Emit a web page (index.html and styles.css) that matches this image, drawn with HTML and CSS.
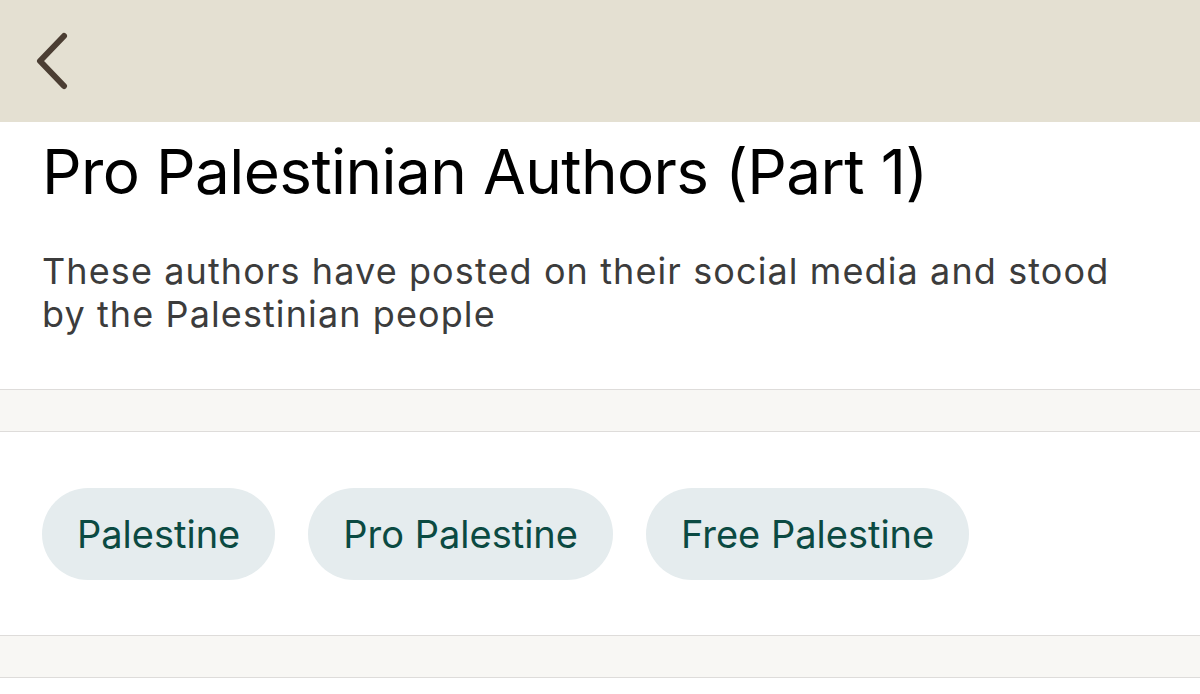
FILE: index.html
```html
<!DOCTYPE html>
<html lang="en">
<head>
  <meta charset="utf-8">
  <title>Pro Palestinian Authors (Part 1)</title>
  <link rel="stylesheet" href="styles.css">
</head>
<body>

<div class="topbar">
  <a href="#" class="back" aria-label="Back">
    <svg width="40" height="60" viewBox="0 0 40 60">
      <polyline points="28,5 4,30 28,55" fill="none" stroke="#4b3e33" stroke-width="6" stroke-linecap="round" stroke-linejoin="round"/>
    </svg>
  </a>
</div>

<div class="intro">
  <h1>Pro Palestinian Authors (Part 1)</h1>
  <p>These authors have posted on their social media and stood by the Palestinian people</p>
</div>

<div class="gap"></div>

<div class="tags">
  <a href="#" class="tag">Palestine</a>
  <a href="#" class="tag">Pro Palestine</a>
  <a href="#" class="tag">Free Palestine</a>
</div>

<div class="gap"></div>

</body>
</html>
```

FILE: styles.css
```css
body {
    margin: 0;
    font-family: Inter, "Noto Sans", sans-serif;
    background: #fff;
    color: #000;
}
.topbar {
    height: 122px;
    background: #e4e0d2;
    display: flex;
    align-items: center;
    padding-left: 36px;
}
.back {
    display: block;
    width: 40px;
    height: 60px;
}
.intro {
    padding: 12px 42px 0;
    height: 255px;
    border-bottom: 1px solid #dedcda;
}
.intro h1 {
    font-size: 62px;
    font-weight: 400;
    margin: 0;
    line-height: 76px;
    letter-spacing: -0.6px;
}
.intro p {
    font-size: 36px;
    color: #3c3c3c;
    margin: 40px 0 0;
    line-height: 43px;
    letter-spacing: 1.1px;
    max-width: 1090px;
}
.gap {
    height: 41px;
    background: #f8f7f4;
    border-bottom: 1px solid #dedcda;
}
.tags {
    display: flex;
    gap: 33px;
    padding: 56px 42px 55px;
    border-bottom: 1px solid #dedcda;
}
.tag {
    display: block;
    height: 92px;
    line-height: 92px;
    padding: 0 35px;
    border-radius: 46px;
    background: #e5ecee;
    color: #0b4a42;
    font-size: 38px;
    text-decoration: none;
}
```
